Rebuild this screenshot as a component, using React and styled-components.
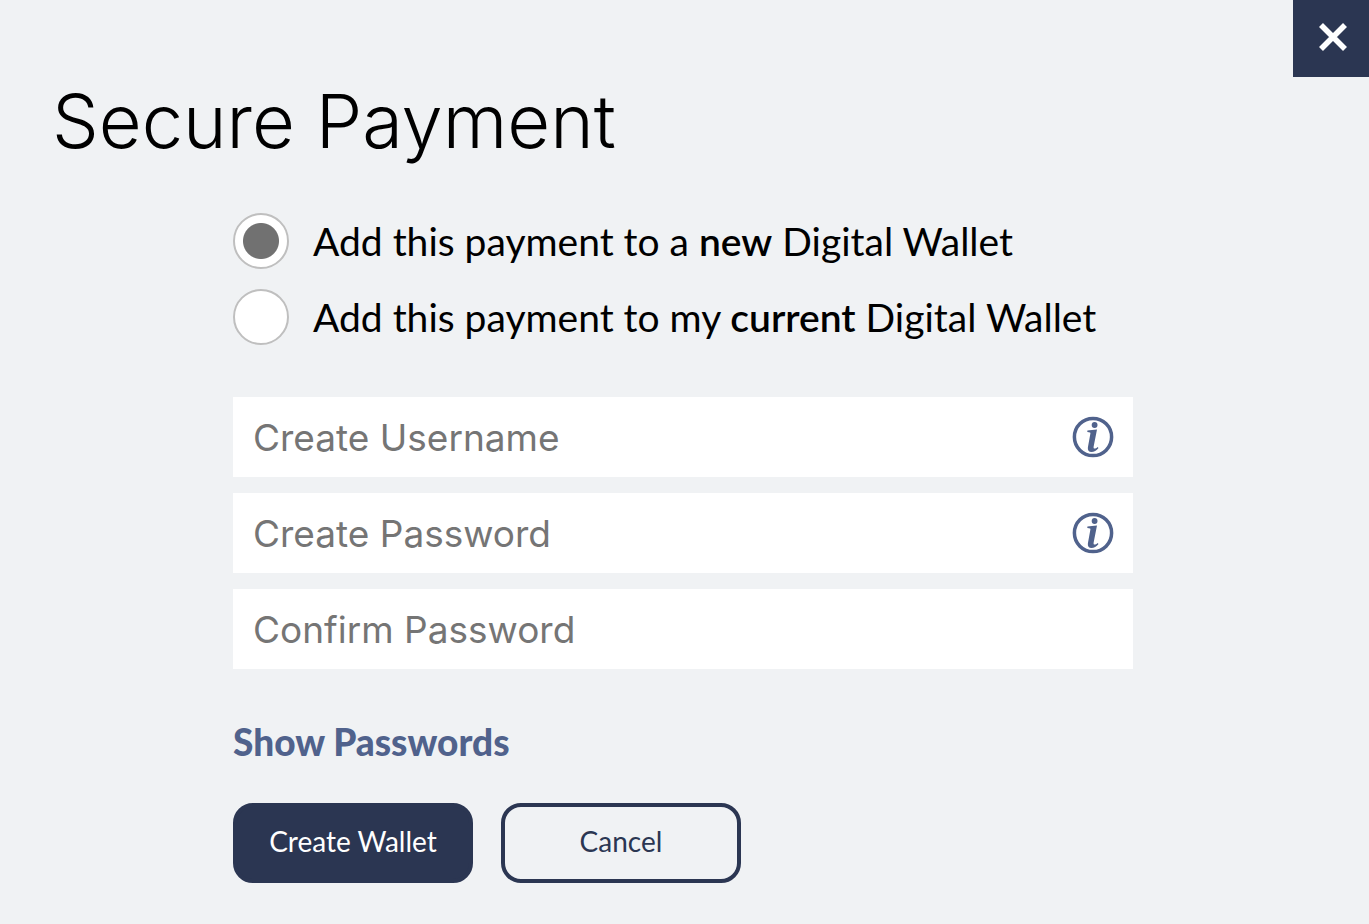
import React, { useState } from 'react'
import styled, { createGlobalStyle } from 'styled-components'

const App = () => {
	const [wallet, setWallet] = useState('new')
	const [showPasswords, setShowPasswords] = useState(false)

	const passwordType = showPasswords ? 'text' : 'password'

	return (
		<Page>
			<GlobalStyle />
			<TopBar>
				<CloseButton type="button" aria-label="Close">
					<CloseIcon />
				</CloseButton>
			</TopBar>
			<Title>Secure Payment</Title>
			<Form onSubmit={e => e.preventDefault()}>
				<WalletOptions>
					<Option>
						<Radio
							type="radio"
							name="wallet"
							value="new"
							checked={wallet === 'new'}
							onChange={e => setWallet(e.target.value)}
						/>
						<span>
							Add this payment to a <Emphasis>new</Emphasis> Digital Wallet
						</span>
					</Option>
					<Option>
						<Radio
							type="radio"
							name="wallet"
							value="current"
							checked={wallet === 'current'}
							onChange={e => setWallet(e.target.value)}
						/>
						<span>
							Add this payment to my <Emphasis>current</Emphasis> Digital Wallet
						</span>
					</Option>
				</WalletOptions>
				<Fields>
					<Field>
						<Input type="text" placeholder="Create Username" aria-label="Create Username" />
						<InfoButton type="button" aria-label="Username rules">
							<InfoIcon />
						</InfoButton>
					</Field>
					<Field>
						<Input type={passwordType} placeholder="Create Password" aria-label="Create Password" />
						<InfoButton type="button" aria-label="Password rules">
							<InfoIcon />
						</InfoButton>
					</Field>
					<Field>
						<Input type={passwordType} placeholder="Confirm Password" aria-label="Confirm Password" />
					</Field>
				</Fields>
				<ShowPasswords type="button" onClick={() => setShowPasswords(!showPasswords)}>
					Show Passwords
				</ShowPasswords>
				<Actions>
					<Button type="submit" $primary>
						Create Wallet
					</Button>
					<Button type="button">Cancel</Button>
				</Actions>
			</Form>
		</Page>
	)
}

const CloseIcon = () => (
	<svg width="30" height="30" viewBox="0 0 30 30" fill="none" stroke="#fff" strokeWidth="5.6">
		<path d="M3 3 L27 27 M27 3 L3 27" />
	</svg>
)

const InfoIcon = () => (
	<svg width="42" height="42" viewBox="0 0 42 42">
		<circle cx="21" cy="21" r="18.6" fill="none" stroke="#50628c" strokeWidth="3.5" />
		<circle cx="22.6" cy="9" r="2.9" fill="#50628c" />
		<path
			d="M15.4 14.4 C18.4 14.2 21.5 13.9 25 13.4 L21.7 30.2 C21.4 31.9 21.7 32.5 22.5 32.5 C23.4 32.5 24.6 31.9 25.6 30.9 L26.5 31.9 C24.5 34.4 22 36 19.5 36 C16.8 36 15.4 34.1 15.9 31.2 L18.4 17.6 C18.6 16.6 18.1 16.2 15.3 16.1 Z"
			fill="#50628c"
		/>
	</svg>
)

const GlobalStyle = createGlobalStyle`
	* {
		box-sizing: border-box;
	}

	body {
		margin: 0;
		background: #f0f2f4;
		color: #000;
		font-family: Lato, 'Open Sans', sans-serif;
	}

	button,
	input {
		font-family: inherit;
	}
`

const Page = styled.main`
	min-height: 100vh;
	padding-bottom: 40px;
`

const TopBar = styled.div`
	display: flex;
	justify-content: flex-end;
`

const CloseButton = styled.button`
	display: flex;
	align-items: center;
	justify-content: center;
	width: 76px;
	height: 77px;
	padding: 0 0 3px 4px;
	border: 0;
	background: #2b3652;
	cursor: pointer;
`

const Title = styled.h1`
	margin: 0 52px;
	font-family: Inter, 'Open Sans', sans-serif;
	font-size: 74px;
	font-weight: 300;
	line-height: 88px;
`

const Form = styled.form`
	margin: 48px 236px 0 233px;
`

const WalletOptions = styled.div`
	display: flex;
	flex-direction: column;
	gap: 20px;
`

const Option = styled.label`
	display: flex;
	align-items: center;
	gap: 24px;
	font-size: 39px;
	line-height: 56px;
	white-space: nowrap;
	cursor: pointer;
`

const Radio = styled.input`
	appearance: none;
	flex: none;
	width: 56px;
	height: 56px;
	margin: 0;
	border: 2px solid #bfbfbf;
	border-radius: 50%;
	background: #fff;

	&:checked {
		background: radial-gradient(circle, #717171 17.5px, #fff 18.5px);
	}
`

const Emphasis = styled.strong`
	font-weight: 600;
`

const Fields = styled.div`
	display: flex;
	flex-direction: column;
	gap: 16px;
	margin-top: 52px;
`

const Field = styled.div`
	display: flex;
	align-items: center;
	height: 80px;
	padding: 0 19px 0 20px;
	background: #fff;
`

const Input = styled.input`
	flex: 1;
	min-width: 0;
	height: 80px;
	padding: 0;
	border: 0;
	outline: 0;
	background: transparent;
	font-family: Inter, Roboto, sans-serif;
	font-size: 37px;

	&::placeholder {
		color: #757575;
		opacity: 1;
	}
`

const InfoButton = styled.button`
	display: flex;
	padding: 0;
	border: 0;
	background: none;
	cursor: pointer;
`

const ShowPasswords = styled.button`
	display: block;
	margin-top: 51px;
	padding: 0;
	border: 0;
	background: none;
	color: #50628c;
	font-size: 37px;
	font-weight: 900;
	line-height: 44px;
	cursor: pointer;
`

const Actions = styled.div`
	display: flex;
	gap: 28px;
	margin-top: 39px;
`

const Button = styled.button`
	width: 240px;
	height: 80px;
	padding: 0 0 4px;
	border: 4px solid #2b3652;
	border-radius: 20px;
	background: ${({ $primary }) => ($primary ? '#2b3652' : 'transparent')};
	color: ${({ $primary }) => ($primary ? '#fff' : '#2b3652')};
	font-size: 28px;
	cursor: pointer;
`

export default App
